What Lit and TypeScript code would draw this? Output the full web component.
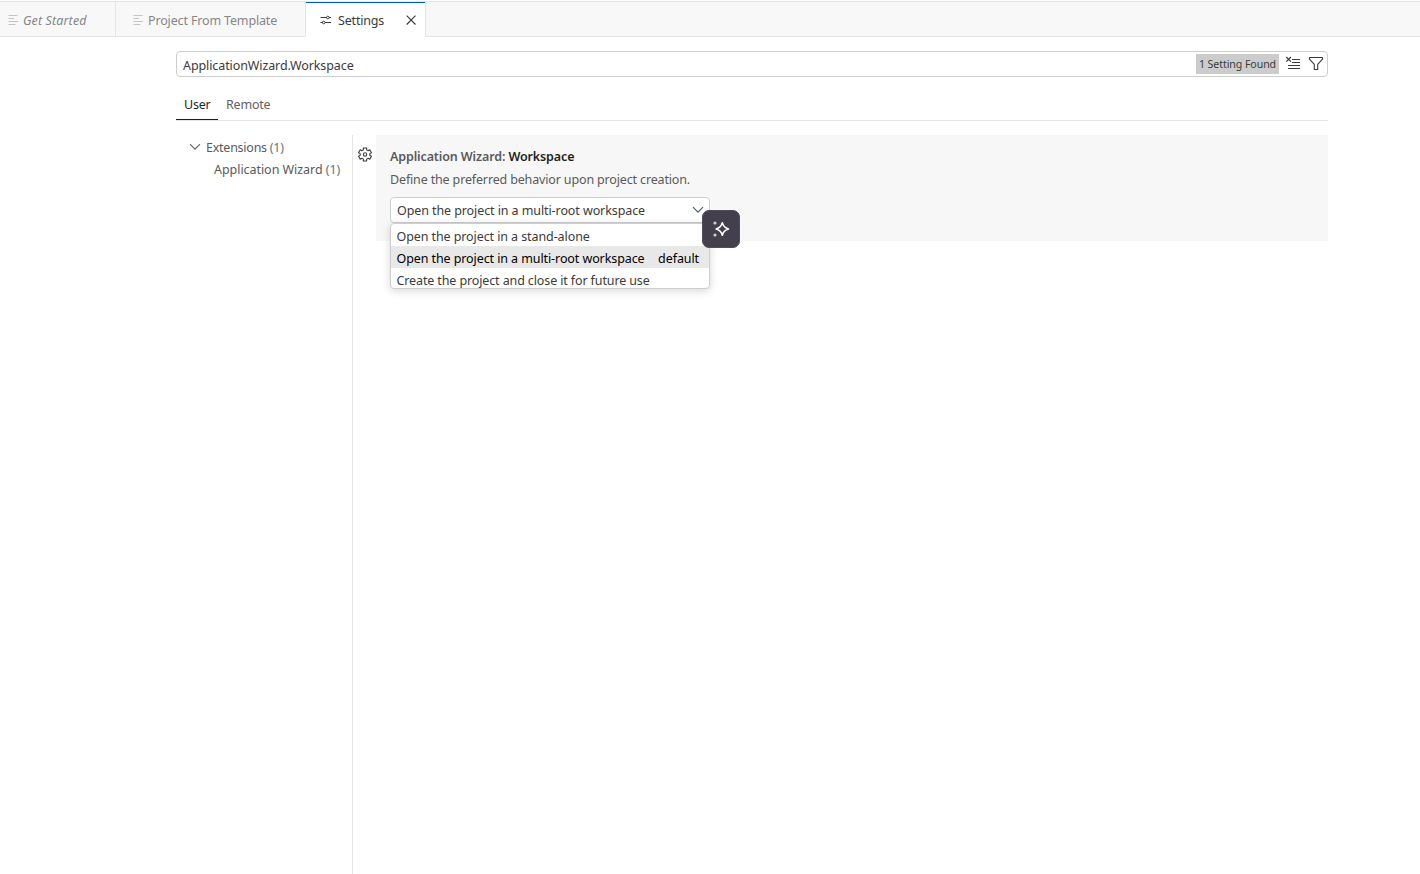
import { LitElement, html, css, svg } from "lit";
import { customElement } from "lit/decorators.js";

const listIcon = html`<svg class="icon" width="11" height="12" viewBox="0 0 11 12">
  <path d="M0.5 1.5h9M0.5 4.5h5.5M0.5 7.5h9.5M0.5 10.5h7" stroke="#c4c4c4" fill="none" />
</svg>`;

const chevron = (color: string) => html`<svg width="12" height="8" viewBox="0 0 12 8">
  <path d="M1 1.2L6 6.2L11 1.2" fill="none" stroke=${color} stroke-width="1.1" />
</svg>`;

const gearPoints = (() => {
  const pts: string[] = [];
  for (let i = 0; i < 6; i++) {
    const mid = (i * Math.PI) / 3 + Math.PI / 6;
    for (const [off, r] of [[-0.34, 4.9], [-0.25, 6.7], [0.25, 6.7], [0.34, 4.9]]) {
      pts.push(`${(7.5 + r * Math.cos(mid + off)).toFixed(2)},${(7.5 + r * Math.sin(mid + off)).toFixed(2)}`);
    }
  }
  return pts.join(" ");
})();

@customElement("app-root")
export class AppRoot extends LitElement {
  static styles = css`
    :host {
      display: flex;
      flex-direction: column;
      height: 100vh;
      overflow: hidden;
      background: #fff;
      color: #3b3b3b;
      font: 12.5px/22px "Noto Sans", "Open Sans", sans-serif;
      letter-spacing: -0.1px;
      white-space: nowrap;
    }
    * { box-sizing: border-box; }
    svg { display: block; flex: none; }
    .tabs {
      display: flex;
      flex: none;
      height: 37px;
      padding-top: 2px;
      background: linear-gradient(#fff 1px, #e5e5e5 1px, #e5e5e5 2px, #f8f8f8 2px);
      border-bottom: 1px solid #e5e5e5;
    }
    .tab {
      display: flex;
      align-items: center;
      border-right: 1px solid #e5e5e5;
      color: #868686;
      padding-top: 3px;
    }
    .tab .icon { margin: 0 4px 1px 0; }
    .first { width: 116px; padding-left: 8px; font-style: italic; letter-spacing: 0.12px; }
    .second { width: 190px; padding-left: 17px; letter-spacing: -0.15px; }
    .active {
      width: 120px;
      height: 35px;
      margin-bottom: -1px;
      padding: 2px 8px 0 14px;
      background: #fff;
      box-shadow: inset 0 1px #005fb8;
      color: #3b3b3b;
      letter-spacing: -0.18px;
    }
    .active svg { margin-bottom: 1px; }
    .active .label { flex: 1; margin-left: 7px; }
    .page { flex: 1; display: flex; flex-direction: column; margin: 14px 92px 0 176px; min-height: 0; }
    .search {
      display: flex;
      align-items: center;
      flex: none;
      height: 26px;
      border: 1px solid #cecece;
      border-radius: 4px;
      padding: 0 3px 0 6px;
    }
    .search svg { margin-bottom: 2px; }
    .query { flex: 1; padding-top: 3px; }
    .count {
      width: 83px;
      height: 20px;
      margin-right: 6px;
      background: #cccccc;
      text-align: center;
      font-size: 10.6px;
      line-height: 20px;
      letter-spacing: -0.08px;
    }
    .search svg + svg { margin-left: 7px; }
    .scopes { display: flex; flex: none; height: 31px; margin-top: 13px; border-bottom: 1px solid #e5e5e5; }
    .scope { height: 30px; padding: 4px 8px 0; color: #616161; letter-spacing: -0.2px; }
    .scope.on { width: 42px; color: #1f1f1f; border-bottom: 1px solid #1f1f1f; }
    .body { display: flex; flex: 1; margin-top: 14px; min-height: 0; }
    .tree { width: 177px; border-right: 1px solid #e5e5e5; padding-top: 2px; color: #5a5a5a; }
    .node { display: flex; align-items: center; padding-left: 13px; letter-spacing: -0.25px; }
    .node svg { margin: 0 5px 2px 0; }
    .child { padding-left: 38px; letter-spacing: -0.05px; }
    .num { color: #717171; }
    .gear { width: 23px; padding: 12px 0 0 4px; }
    .setting { flex: 1; height: 106px; padding: 11px 14px 0; background: #f7f7f7; color: #5a5a5a; }
    .title { font-weight: 600; height: 22px; letter-spacing: -0.12px; }
    .title b { font-weight: 600; color: #1f1f1f; }
    .desc { height: 22px; margin-top: 1px; letter-spacing: -0.15px; }
    .select {
      position: relative;
      display: flex;
      align-items: center;
      justify-content: space-between;
      width: 320px;
      height: 26px;
      margin-top: 6px;
      padding: 0 5px 0 6px;
      background: #fff;
      border: 1px solid #cecece;
      border-radius: 4px;
      color: #3b3b3b;
      letter-spacing: -0.09px;
    }
    .value { padding-top: 2px; }
    .menu {
      position: absolute;
      left: -1px;
      top: 25px;
      width: 320px;
      height: 66px;
      overflow: hidden;
      background: #fff;
      border: 1px solid #cecece;
      border-radius: 4px;
      box-shadow: 0 2px 8px rgba(0, 0, 0, 0.16);
    }
    .option { display: flex; justify-content: space-between; height: 22px; padding: 2px 10px 0 5.5px; line-height: 22px; }
    .option.on { background: #e8e8e8; color: #000; }
    .option:last-child { letter-spacing: -0.12px; }
    .assist {
      position: absolute;
      left: 311px;
      top: 12px;
      display: grid;
      place-items: center;
      width: 38px;
      height: 38px;
      background: #443f4d;
      border: 1px solid #524d5b;
      border-radius: 7px;
    }
  `;

  render() {
    return html`
      <div class="tabs">
        <div class="tab first">${listIcon}<span>Get Started</span></div>
        <div class="tab second">${listIcon}<span>Project From Template</span></div>
        <div class="tab active">
          <svg width="11" height="11" viewBox="0 0 11 11" fill="none" stroke="#3b3b3b">
            <path d="M0.5 2.5h6M9 2.5h2M0.5 7.5h2M5 7.5h6" />
            <circle cx="7.8" cy="2.5" r="1.3" /><circle cx="3.7" cy="7.5" r="1.3" />
          </svg>
          <span class="label">Settings</span>
          <svg width="12" height="12" viewBox="0 0 12 12" fill="none" stroke="#3b3b3b" stroke-width="1.1">
            <path d="M1.7 1.7l8.8 8.8M10.5 1.7l-8.8 8.8" />
          </svg>
        </div>
      </div>
      <div class="page">
        <div class="search">
          <span class="query">ApplicationWizard.Workspace</span>
          <span class="count">1 Setting Found</span>
          <svg width="16" height="16" viewBox="0 0 16 16" fill="none" stroke="#3b3b3b">
            <path d="M1.3 2l4.6 4.6M5.9 2l-4.6 4.6" stroke-width="1.2" />
            <path d="M7 4.5h8M7 7.5h8M3 10.5h12M3 13.5h12" />
          </svg>
          <svg width="16" height="16" viewBox="0 0 16 16" fill="none" stroke="#3b3b3b" stroke-width="1.1" stroke-linejoin="round">
            <path d="M1.5 2.5h13v1.6L9.7 9.3v5.2H6.3V9.3L1.5 4.1z" />
          </svg>
        </div>
        <div class="scopes">
          <span class="scope on">User</span><span class="scope">Remote</span>
        </div>
        <div class="body">
          <div class="tree">
            <div class="node">${chevron("#616161")}<span>Extensions <span class="num">(1)</span></span></div>
            <div class="node child"><span>Application Wizard <span class="num">(1)</span></span></div>
          </div>
          <div class="gear">
            <svg width="16" height="15" viewBox="0 0 16 15" fill="none" stroke="#3b3b3b" stroke-width="1.1" stroke-linejoin="round">
              <g transform="translate(0.5 0)">
                ${svg`<polygon points=${gearPoints} />`}
                <circle cx="7.5" cy="7.5" r="1.7" />
              </g>
            </svg>
          </div>
          <div class="setting">
            <div class="title">Application Wizard: <b>Workspace</b></div>
            <div class="desc">Define the preferred behavior upon project creation.</div>
            <div class="select">
              <span class="value">Open the project in a multi-root workspace</span>
              ${chevron("#44586c")}
              <div class="menu">
                <div class="option"><span>Open the project in a stand-alone</span></div>
                <div class="option on"><span>Open the project in a multi-root workspace</span><span>default</span></div>
                <div class="option"><span>Create the project and close it for future use</span></div>
              </div>
              <div class="assist">
                <svg width="18" height="18" viewBox="0 0 18 18" fill="none" stroke="#fff" stroke-width="1.6" stroke-linejoin="round">
                  <path d="M10.3 2.8Q11.6 7.7 16.5 9Q11.6 10.3 10.3 15.2Q9 10.3 4.1 9Q9 7.7 10.3 2.8z" />
                  <circle cx="3" cy="3" r="1.6" fill="#d0ced4" stroke="none" />
                  <circle cx="3" cy="15" r="1.6" fill="#d0ced4" stroke="none" />
                </svg>
              </div>
            </div>
          </div>
        </div>
      </div>
    `;
  }
}
